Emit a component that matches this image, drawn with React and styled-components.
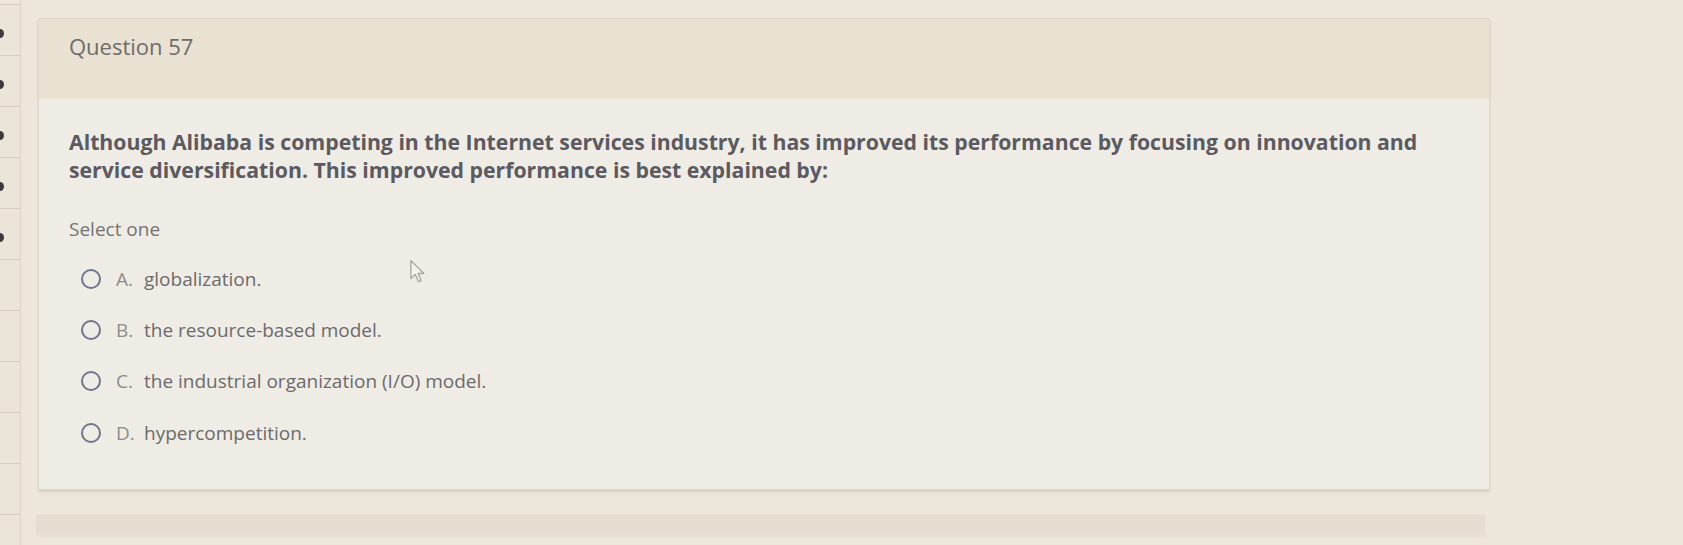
import React from "react";
import styled, { createGlobalStyle } from "styled-components";

const Global = createGlobalStyle`
  html, body { margin: 0; padding: 0; }
  body {
    background: #ede6da;
    font-family: "Open Sans", "Noto Sans", "Liberation Sans", sans-serif;
    overflow: hidden;
  }
`;

const Page = styled.div`
  display: flex;
  align-items: flex-start;
  width: 1683px;
  height: 545px;
  background: #ede6da;
`;

const Nav = styled.div`
  display: flex;
  flex-direction: column;
  width: 21px;
  flex-shrink: 0;
`;

const NavTop = styled.div`
  height: 5px;
  border-bottom: 1px solid #d5cdbf;
  border-right: 1px solid #ddd5c8;
  box-sizing: border-box;
`;

const NavItem = styled.div`
  position: relative;
  height: 51px;
  box-sizing: border-box;
  border-bottom: 1px solid #d5cdbf;
  border-right: 1px solid #ddd5c8;
  background: #ebe4d8;
  &::before {
    content: "";
    display: ${(p) => (p.$dot ? "block" : "none")};
    position: absolute;
    left: -4px;
    top: 24px;
    width: 8px;
    height: 9px;
    border-radius: 50%;
    background: #3c3a3c;
  }
`;

const Main = styled.div`
  display: flex;
  flex-direction: column;
  margin-left: 17px;
  padding-top: 18px;
  width: 1452px;
`;

const Card = styled.section`
  position: relative;
  background: #efece5;
  border: 1px solid #ddd5c7;
  box-shadow: 0 2px 2px rgba(150, 135, 110, 0.25);
`;

const Header = styled.header`
  height: 80px;
  box-sizing: border-box;
  padding: 12px 30px 0;
  background: #e9e1d2;
`;

const Title = styled.h2`
  margin: 0;
  font-size: 22px;
  line-height: 30px;
  font-weight: 400;
  color: #6f6b6b;
`;

const Body = styled.div`
  padding: 29px 30px 30px;
`;

const Prompt = styled.p`
  margin: 0;
  font-size: 21.25px;
  line-height: 28px;
  font-weight: 700;
  color: #5b5a60;
  max-width: 1392px;
`;

const SelectLabel = styled.div`
  margin-top: 31px;
  font-size: 19px;
  line-height: 28px;
  color: #747272;
`;

const Options = styled.div`
  margin-top: 10px;
  display: flex;
  flex-direction: column;
`;

const Option = styled.label`
  display: flex;
  align-items: center;
  height: 51.4px;
  padding-left: 12px;
  font-size: 19px;
  line-height: 26px;
  color: #6c6a6b;
`;

const Radio = styled.span`
  width: 20px;
  height: 20px;
  box-sizing: border-box;
  border: 2px solid #6f7490;
  border-radius: 50%;
  flex-shrink: 0;
  margin-right: 15px;
`;

const Letter = styled.span`
  color: #8d8b8b;
  width: 28px;
  flex-shrink: 0;
`;

const Text = styled.span``;

const Cursor = styled.svg`
  position: absolute;
  left: 370px;
  top: 240px;
`;

const NextCard = styled.div`
  margin-top: 23px;
  margin-left: -2px;
  width: 1449px;
  height: 24px;
  background: linear-gradient(180deg, #e6ded1 0%, #e4dccf 60%, #e9e2d6 100%);
  border-top: 1px solid #f1ebe2;
`;

const options = [
  ["A.", "globalization."],
  ["B.", "the resource-based model."],
  ["C.", "the industrial organization (I/O) model."],
  ["D.", "hypercompetition."],
];

export default function App() {
  return (
    <>
      <Global />
      <Page>
        <Nav>
          <NavTop />
          {Array.from({ length: 11 }).map((_, i) => (
            <NavItem key={i} $dot={i < 5} />
          ))}
        </Nav>
        <Main>
          <Card>
            <Header>
              <Title>Question 57</Title>
            </Header>
            <Body>
              <Prompt>
                Although Alibaba is competing in the Internet services industry, it has improved its
                performance by focusing on innovation and service diversification. This improved
                performance is best explained by:
              </Prompt>
              <SelectLabel>Select one</SelectLabel>
              <Options>
                {options.map(([l, t]) => (
                  <Option key={l}>
                    <Radio />
                    <Letter>{l}</Letter>
                    <Text>{t}</Text>
                  </Option>
                ))}
              </Options>
            </Body>
            <Cursor width="20" height="26" viewBox="0 0 18 24">
              <path
                d="M1.5 1.5 L1.5 18 L5.5 14.2 L8.5 21 L11 20 L8.2 13.4 L13.5 13.4 Z"
                fill="#f3f1ec"
                stroke="#a9a6a2"
                strokeWidth="1.2"
                strokeLinejoin="round"
              />
            </Cursor>
          </Card>
          <NextCard />
        </Main>
      </Page>
    </>
  );
}
